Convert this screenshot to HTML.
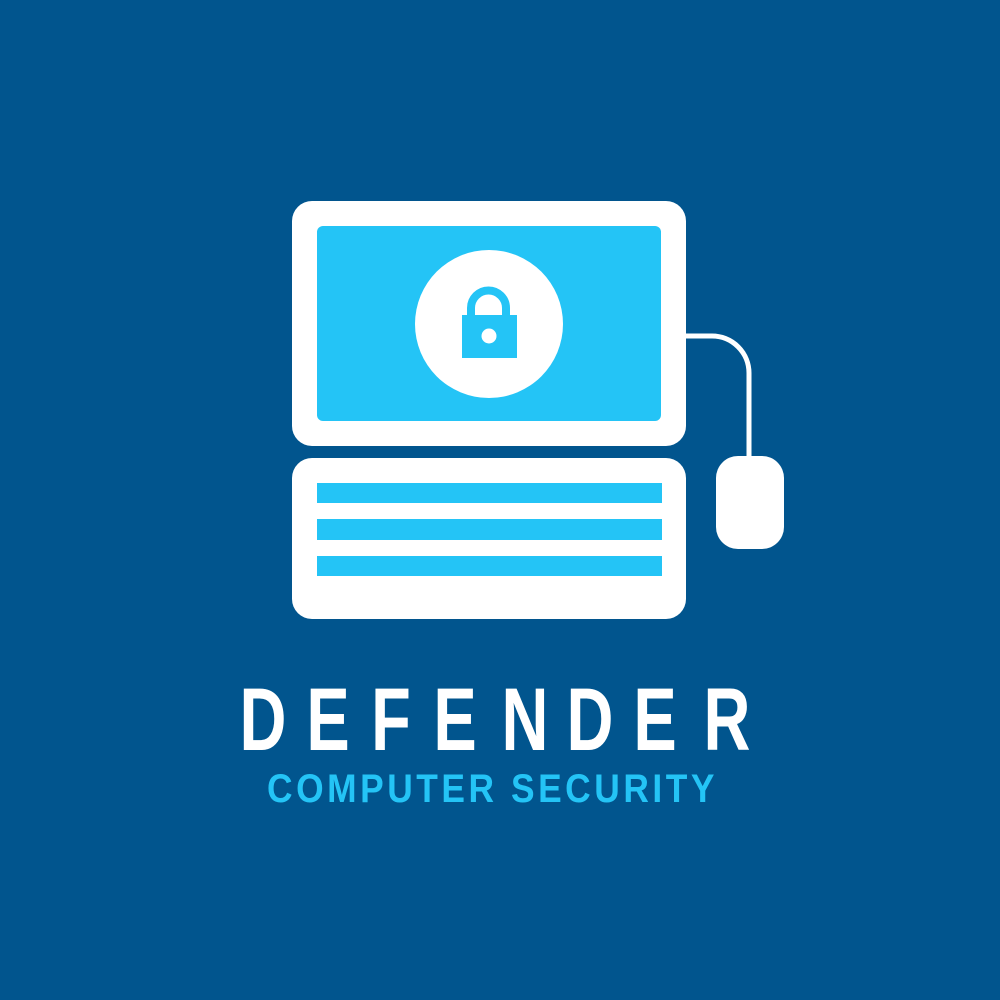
<!DOCTYPE html>
<html><head><style>html,body{margin:0;padding:0;background:#01558e;}svg{display:block}</style></head>
<body>
<svg width="1000" height="1000" viewBox="0 0 1000 1000" xmlns="http://www.w3.org/2000/svg">
<rect width="1000" height="1000" fill="#01558e"/>
<rect x="292" y="201" width="394" height="245" rx="20" fill="#fff"/>
<rect x="317" y="226" width="344" height="195" rx="6" fill="#24c4f6"/>
<circle cx="489" cy="324" r="74" fill="#fff"/>
<path d="M471 316 V308 A17.5 17.5 0 0 1 506 308 V316" fill="none" stroke="#24c4f6" stroke-width="8"/>
<rect x="462" y="315" width="55" height="43" fill="#24c4f6"/>
<circle cx="489" cy="336" r="7.5" fill="#fff"/>
<rect x="292" y="458" width="394" height="161" rx="20" fill="#fff"/>
<rect x="317" y="483" width="345" height="20" fill="#24c4f6"/>
<rect x="317" y="519" width="345" height="21" fill="#24c4f6"/>
<rect x="317" y="556" width="345" height="20" fill="#24c4f6"/>
<path d="M686 336 H712 A37 37 0 0 1 749 373 V458" fill="none" stroke="#fff" stroke-width="5"/>
<rect x="716" y="456" width="68" height="93" rx="22" fill="#fff"/>
<g font-family="Liberation Sans, sans-serif" font-weight="bold" font-size="89" fill="#fff" text-anchor="middle">
<text transform="translate(263,750) scale(0.73,1)">D</text>
<text transform="translate(328,750) scale(0.73,1)">E</text>
<text transform="translate(391,750) scale(0.73,1)">F</text>
<text transform="translate(455,750) scale(0.73,1)">E</text>
<text transform="translate(525,750) scale(0.73,1)">N</text>
<text transform="translate(590,750) scale(0.73,1)">D</text>
<text transform="translate(655,750) scale(0.73,1)">E</text>
<text transform="translate(727,750) scale(0.73,1)">R</text>
</g>
<text x="267" y="802" textLength="451" lengthAdjust="spacingAndGlyphs" font-family="Liberation Sans, sans-serif" font-weight="bold" font-size="40" fill="#24c4f6" letter-spacing="4">COMPUTER SECURITY</text>
</svg>
</body></html>
